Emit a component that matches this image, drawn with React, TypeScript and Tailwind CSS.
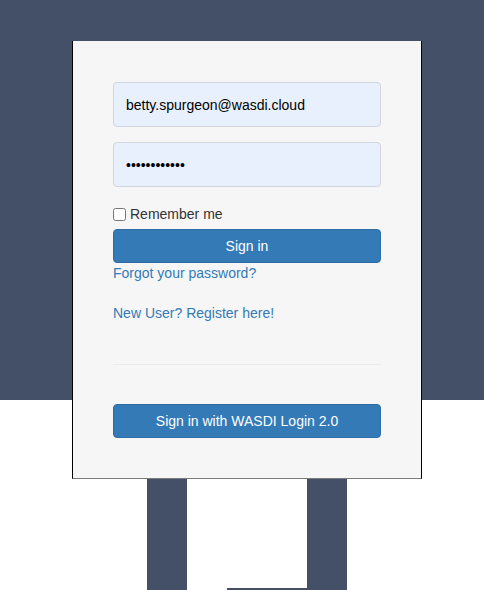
import React from "react";

export default function App() {
  const font = { fontFamily: '"Liberation Sans", Arial, sans-serif' };
  return (
    <div className="relative w-[484px] h-[590px] bg-white overflow-hidden" style={font}>
      <div className="absolute left-0 top-0 w-full h-[400px] bg-[#435068]" />
      <div className="relative flex flex-col">
        <div className="ml-[72px] mt-[41px] w-[350px] h-[438px] bg-[#f6f6f6] border-l border-r border-black border-b border-b-[#7a7a7a] pt-[41px] px-[40px] flex flex-col text-[14px]">
          <input
            readOnly
            value="betty.spurgeon@wasdi.cloud"
            className="h-[45px] w-full rounded-[4px] border border-[#d0d5de] bg-[#e8f0fe] px-[12px] text-[14px] text-black outline-none"
            style={font}
          />
          <input
            readOnly
            type="password"
            value="abcdefghijkl"
            className="mt-[15px] h-[45px] w-full rounded-[4px] border border-[#d0d5de] bg-[#e8f0fe] px-[12px] text-[14px] text-black outline-none"
            style={font}
          />
          <label className="mt-[17px] h-[20px] flex items-center text-[#333] leading-[20px]">
            <input type="checkbox" className="m-0 w-[13px] h-[13px]" />
            <span className="ml-[4px]">Remember me</span>
          </label>
          <button className="mt-[5px] h-[34px] w-full rounded-[4px] border border-[#2e6da4] bg-[#337ab7] text-white text-[14px]">
            Sign in
          </button>
          <div className="h-[20px] leading-[20px] text-[#337ab7]">Forgot your password?</div>
          <div className="mt-[20px] h-[20px] leading-[20px] text-[#337ab7]">New User? Register here!</div>
          <div className="mt-[41px] h-px w-full bg-[#ececec]" />
          <button className="mt-[39px] h-[34px] w-full rounded-[4px] border border-[#2e6da4] bg-[#337ab7] text-white text-[14px]">
            Sign in with WASDI Login 2.0
          </button>
        </div>
        <div className="flex h-[111px]">
          <div className="ml-[147px] w-[40px] h-full bg-[#435068]" />
          <div className="w-[120px] h-full flex flex-col justify-end">
            <div className="ml-[40px] w-[80px] h-[2px] bg-[#435068]" />
          </div>
          <div className="w-[40px] h-full bg-[#435068]" />
        </div>
      </div>
    </div>
  );
}
